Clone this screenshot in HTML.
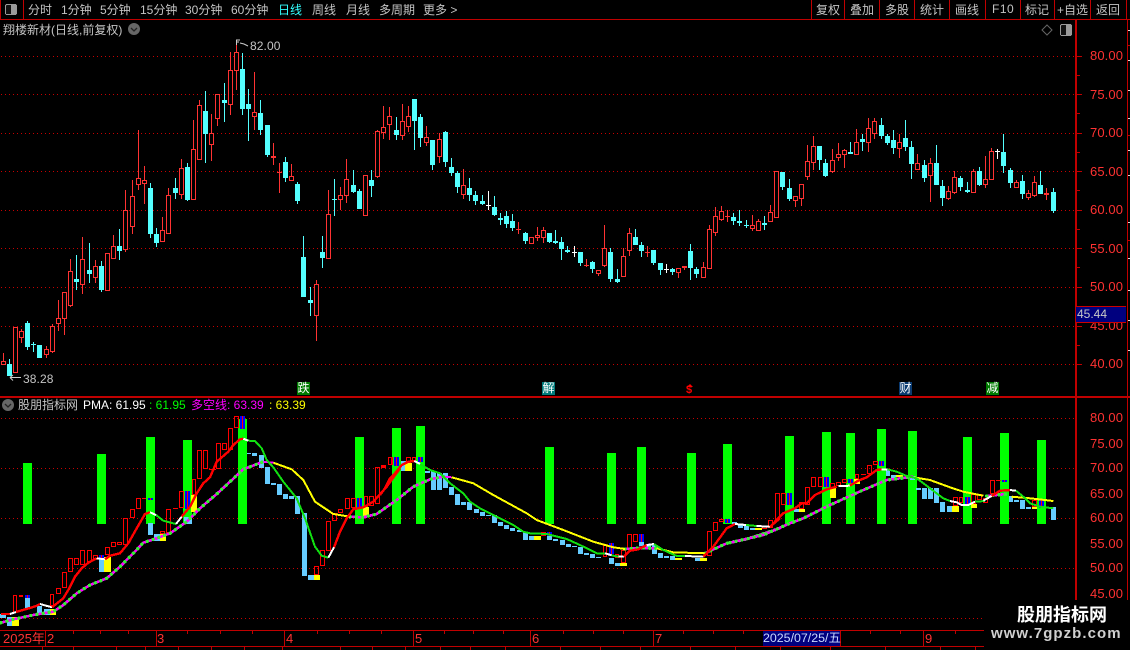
<!DOCTYPE html>
<html><head><meta charset="utf-8"><title>股朋指标网</title>
<style>
html,body{margin:0;padding:0;background:#000;}
#a{position:relative;width:1130px;height:650px;background:#000;overflow:hidden;font-family:"Liberation Sans","WenQuanYi Zen Hei","Noto Sans CJK SC",sans-serif;font-size:12px;color:#c4c4c4;}
#a span{position:absolute;white-space:nowrap;line-height:14px;}
svg{position:absolute;left:0;top:0;}
.n{color:#ff3232;font-size:13px;left:1090px;letter-spacing:.1px}
.x{color:#ff3232;font-size:13px;top:632px}
.e{width:13px;height:13px;top:382px;color:#fff;font-size:12px;text-align:center;line-height:13px!important}
</style></head><body><div id="a">
<svg id="s" width="1130" height="650" shape-rendering="crispEdges"></svg>
<svg id="l" width="1130" height="650"></svg>

<span style="left:28px;top:3px">分时</span>
<span style="left:61px;top:3px">1分钟</span>
<span style="left:100px;top:3px">5分钟</span>
<span style="left:140px;top:3px">15分钟</span>
<span style="left:185px;top:3px">30分钟</span>
<span style="left:231px;top:3px">60分钟</span>
<span style="left:278px;top:3px;color:#3ff">日线</span>
<span style="left:312px;top:3px">周线</span>
<span style="left:346px;top:3px">月线</span>
<span style="left:379px;top:3px">多周期</span>
<span style="left:423px;top:3px">更多 &gt;</span>

<span style="left:816px;top:3px">复权</span>
<span style="left:850px;top:3px">叠加</span>
<span style="left:885px;top:3px">多股</span>
<span style="left:920px;top:3px">统计</span>
<span style="left:955px;top:3px">画线</span>
<span style="left:992px;top:2px;letter-spacing:.5px">F10</span>
<span style="left:1025px;top:3px">标记</span>
<span style="left:1057px;top:3px">+自选</span>
<span style="left:1096px;top:3px">返回</span>

<span style="left:3px;top:23px">翔楼新材(日线,前复权)</span>
<span style="left:250px;top:39px;letter-spacing:.1px">82.00</span>
<span style="left:23px;top:372px;letter-spacing:.1px">38.28</span>

<span class="n" style="top:49px">80.00</span>
<span class="n" style="top:88px">75.00</span>
<span class="n" style="top:126px">70.00</span>
<span class="n" style="top:165px">65.00</span>
<span class="n" style="top:203px">60.00</span>
<span class="n" style="top:242px">55.00</span>
<span class="n" style="top:280px">50.00</span>
<span class="n" style="top:319px">45.00</span>
<span class="n" style="top:357px">40.00</span>

<span style="left:1076px;top:306px;width:50px;height:15px;background:#00007f;border-top:1px solid #c00;border-bottom:1px solid #c00;line-height:15px;color:#c8c8c8;text-indent:1px">45.44</span>

<span class="e" style="left:297px;background:#007a00">跌</span>
<span class="e" style="left:542px;background:#007a7a">解</span>
<span style="left:686px;top:383px;color:#f00;font-size:11px;font-weight:bold;line-height:14px">$</span>
<span class="e" style="left:899px;background:#0a3a70">财</span>
<span class="e" style="left:986px;background:#007a00">减</span>

<span style="left:18px;top:398px">股朋指标网</span>
<span style="left:83px;top:398px;color:#fff">PMA: 61.95</span>
<span style="left:149px;top:398px;color:#0f0">: 61.95</span>
<span style="left:191px;top:398px;color:#f0f">多空线: 63.39</span>
<span style="left:269px;top:398px;color:#ff0">: 63.39</span>

<span class="n" style="top:411px">80.00</span>
<span class="n" style="top:437px">75.00</span>
<span class="n" style="top:461px">70.00</span>
<span class="n" style="top:487px">65.00</span>
<span class="n" style="top:511px">60.00</span>
<span class="n" style="top:537px">55.00</span>
<span class="n" style="top:561px">50.00</span>
<span class="n" style="top:587px">45.00</span>

<span class="x" style="left:3px">2025年</span>
<span class="x" style="left:47px">2</span>
<span class="x" style="left:157px">3</span>
<span class="x" style="left:286px">4</span>
<span class="x" style="left:415px">5</span>
<span class="x" style="left:532px">6</span>
<span class="x" style="left:655px">7</span>
<span class="x" style="left:925px">9</span>
<span style="left:763px;top:631px;width:77px;height:15px;background:#00007f;line-height:15px;color:#c8d8ff;font-size:12.4px">2025/07/25/五</span>

<div style="position:absolute;left:984px;top:600px;width:146px;height:50px;background:#000"></div>
<span style="left:1017px;top:605px;color:#fff;font-size:18px;font-weight:bold;line-height:20px">股朋指标网</span>
<span style="left:991px;top:625px;color:#d0d0d0;font-size:15px;font-weight:bold;letter-spacing:1.05px;line-height:17px">www.7gpzb.com</span>
</div>
<script>
var s='',l='',R='#ff3232',C='#54ffff',LN='#c00000';
function rc(x,y,w,h,f){s+='<rect x="'+x+'" y="'+y+'" width="'+w+'" height="'+h+'" fill="'+f+'"/>';}
/* grid */
[56,94,133,171,210,248,287,326,364,418,468,518,568,618].forEach(function(y){
 for(var x=1;x<1075;x+=4)rc(x,y,1,1,'#c80000');
});
/* frame */
rc(0,19,1130,1,LN);rc(23,0,1,19,LN);rc(0,0,1,19,LN);
[811,844,879,914,949,985,1020,1054,1090,1126].forEach(function(x){rc(x,0,1,19,LN)});
rc(1075,20,2,580,LN);rc(1127,20,1,610,LN);
rc(0,396,1130,2,LN);rc(0,630,984,1,LN);rc(0,646,984,1,LN);
rc(1127,45,3,1,LN);rc(1127,135,3,1,LN);rc(1127,240,3,1,LN);rc(1127,397,3,1,LN);
[30,60,90,118,150,175,222,258,290,320,350].forEach(function(y){rc(1128,y,2,1,'#ddd')});
[56,94,133,171,210,248,287,326,364].forEach(function(y,i){rc(1077,y,5,1,LN);if(i<8)rc(1077,y+19,3,1,LN)});
[45,156,284,413,530,653,763,840,923].forEach(function(x){rc(x,631,1,15,LN)});
[73,100,128,187,220,252,317,349,381,444,473,503,563,593,623,683,713,743,800,870,900,955,1015,1045,1075].forEach(function(x){rc(x,631,1,3,LN)});
[42,73,116,145,178,211,244,282,340,372,405,440,470,505,560,600,640,690,735,780,830,885,940,975].forEach(function(x){rc(x,647,1,3,LN)});
/* main candles */
var D="r353,361,365,365 c359,364,376,376 r327,327,373,373 r329,331,338,343 c321,323,347,350 c342,344,345,352 c345,345,358,358 r346,349,355,358 r324,326,352,353 r300,318,324,331 r292,292,319,335 r259,271,306,307 c255,279,282,290 r237,259,285,294 c243,270,274,283 r260,266,278,283 c261,266,290,292 r253,253,291,291 r235,246,259,259 c229,246,251,260 r190,210,250,252 r180,196,227,234 r130,178,185,190 r166,180,184,204 c183,188,234,238 c228,234,243,247 r217,230,242,242 r188,195,234,234 c178,188,193,199 r159,168,195,199 c163,167,200,201 r120,149,200,200 r100,105,160,160 c91,111,134,163 r114,133,145,161 r94,94,119,126 c83,100,103,122 r52,70,105,115 r40,52,71,90 c53,69,109,115 c89,104,109,141 r72,112,117,130 c100,113,130,135 c125,125,155,157 r143,156,158,165 r163,172,173,193 c157,162,178,182 r164,176,181,181 c182,184,201,204 c236,257,297,297 c287,300,303,316 r280,284,316,341 c236,252,258,268 r190,214,259,259 c179,199,200,216 r187,195,200,210 r159,179,196,203 c170,185,192,193 c189,191,209,209 r175,175,216,216 c170,180,186,197 r130,131,177,178 r106,127,133,139 r107,116,125,140 c117,130,135,140 r104,121,136,140 r106,116,127,132 c99,99,121,150 c114,117,138,147 r126,137,143,146 c140,140,165,170 r133,139,157,163 c131,132,162,167 c158,167,173,176 c171,173,187,193 r169,185,195,199 c178,188,195,201 c191,195,201,205 c195,201,204,205 w191,205,206,210 c196,207,215,216 c213,218,220,225 c211,216,224,228 c214,221,228,231 r222,229,230,234 c232,233,241,244 r237,237,244,244 r227,235,238,241 r227,230,238,243 c233,233,242,243 c230,241,243,244 c237,242,249,260 c246,250,252,253 w246,252,253,257 c252,252,263,266 r259,265,266,267 c261,262,269,273 r270,270,274,276 r225,248,266,267 c248,252,279,282 c269,279,282,283 r248,256,277,277 r228,233,251,256 c229,237,245,245 c242,245,251,257 r246,252,253,257 c250,250,263,265 c263,263,270,275 w264,269,270,273 c268,269,272,275 r268,268,273,278 r266,266,268,270 c244,251,268,280 c267,269,274,278 r262,267,278,278 r225,229,269,269 r207,216,233,236 r206,211,220,221 r210,216,217,222 c213,217,221,225 c210,221,223,226 c220,225,226,228 r215,225,229,231 r219,221,231,231 c216,223,225,230 r205,212,222,222 r171,171,218,218 c172,172,187,190 c179,188,199,201 r196,196,201,207 r184,184,199,206 r145,161,177,180 r136,146,163,170 c146,146,160,170 c159,163,176,177 r149,160,172,173 r143,154,158,161 r149,150,155,168 c142,152,154,154 r129,142,155,155 c134,139,142,151 r118,128,143,152 r118,121,134,139 c118,125,136,139 c134,136,143,145 c130,140,148,154 r134,142,149,158 c120,138,147,151 c141,147,164,179 r154,163,170,170 c160,165,178,182 r158,163,176,202 c145,163,185,185 c180,186,198,206 r186,191,199,200 r171,177,193,194 c176,178,187,191 c182,190,192,193 r169,171,193,193 c167,171,185,186 r156,179,185,188 r148,151,180,180 w149,151,152,159 c134,152,166,173 c168,170,183,188 r180,182,188,188 c175,181,194,199 r190,193,198,200 r176,182,196,197 c171,185,194,194 r188,193,195,200 c188,192,211,213".split(' ');
D.forEach(function(t,i){
 var k=t[0],v=t.slice(1).split(',').map(Number),cx=Math.floor(3.1+6.14*i),c=k=='r'?R:k=='c'?C:'#fff';
 rc(cx,v[0],1,v[3]-v[0],c);
 var h=v[2]-v[1];
 if(k=='w'){rc(cx-2,v[1],5,1,c);return;}
 if(k=='c'||h<3){rc(cx-2,v[1],5,Math.max(h,1),c);return;}
 rc(cx-2,v[1],1,h,c);rc(cx+2,v[1],1,h,c);rc(cx-2,v[1],5,1,c);rc(cx-2,v[2]-1,5,1,c);
 rc(cx-1,v[1]+1,3,h-2,'#000');
});
/* lower panel green bars */
[[23,463],[97,454],[146,437],[183,440],[238,419],[355,437],[392,428],[416,426],[545,447],[607,453],[637,447],[687,453],[723,444],[785,436],[822,432],[846,433],[877,429],[908,431],[963,437],[1000,433],[1037,440]].forEach(function(b){rc(b[0],b[1],9,524-b[1],'#00ff00')});
/* lower candles in zoom coords */
var G=[[0,"b0,18,672,684 b21,36,681,708 y36,57,681,708 b75,90,624,655 d75,90,615,624 b111,126,648,672 b132,150,656,675 y150,168,656,675 b297,312,505,546 d297,312,496,505 y312,333,500,546 b444,459,400,435 d444,459,325,330 b462,480,432,452 y480,498,432,452 b552,576,380,400 y573,591,316,366 d555,570,303,357 d720,735,78,117 b741,753,189,191 b756,771,189,198 b777,792,195,234 b795,810,232,282 b813,828,280,285 b831,846,282,315 b849,864,312,327 b867,882,319,327 b885,900,319,372 b906,921,369,558 b924,942,555,570 y942,960,555,570 d1071,1086,325,355 y1089,1107,351,381 d1182,1197,202,228 r40,52,615,670 r58,70,616,622 r150,163,612,648 r168,183,595,613 r186,201,547,595 r204,219,505,547 r222,237,505,527 r240,255,481,527 r261,276,481,516 r279,294,496,508 r315,330,472,496 r333,348,457,472 r351,366,457,467 r369,384,385,466 r390,405,358,385 r408,423,325,358 f426,438,325,328 r480,495,424,432 r498,513,358,430 f519,534,355,358 r537,552,304,355 r576,588,267,316 r591,606,181,268 r609,624,181,238 f627,648,236,238 r648,663,160,238 r666,681,160,181 r684,699,115,181 r702,717,78,115 r942,957,529,555 r960,975,481,529 r978,993,394,483 r996,1011,370,394 r1014,1029,358,370 r1035,1050,325,358 r1053,1068,325,355 r1092,1104,319,351 r1107,1122,319,350 r1125,1140,232,342 r1143,1158,226,233 r1164,1179,202,227"],
[1140,"r3,18,226,235 b63,78,214,243 y75,96,220,243 b135,150,243,249 b153,168,244,300 b171,186,250,300 b189,204,250,294 b207,222,291,315 b225,240,312,345 b243,258,336,345 b261,276,336,360 b282,297,357,369 b300,315,366,378 b318,333,375,377 b336,351,375,399 b354,369,396,408 b372,387,405,417 b390,405,414,423 b411,426,420,426 b429,444,426,450 b447,462,438,450 y462,483,438,450 d501,516,426,438 b501,516,438,450 b519,534,447,453 b540,555,450,465 b558,573,462,471 b576,591,468,471 b594,609,471,492 b612,627,489,495 b630,645,492,504 b648,663,501,503 d687,702,459,492 b687,702,504,522 b705,720,519,528 y720,741,519,528 d777,792,433,456 b777,792,456,468 b798,813,462,470 b816,831,465,492 b834,849,489,504 b852,867,498,504 b870,885,498,510 y885,906,504,510 b945,960,504,513 y960,981,504,513 d1035,1050,388,400 b1056,1071,397,405 b1074,1089,405,414 b1092,1107,411,420 b1110,1125,414,420 y1125,1146,414,420 r24,36,202,226 d42,57,202,228 r78,93,202,220 r96,108,202,214 d114,129,202,216 r483,498,426,438 r669,681,462,501 r705,717,492,503 r723,737,480,519 r741,756,433,480 r759,774,433,456 r981,996,424,500 r999,1014,397,424 r1017,1032,388,397 r1146,1161,408,416 r1164,1179,391,414 r1185,1200,310,391"],
[2190,"b6,21,396,405 b24,39,402,411 b42,57,408,420 b60,75,414,420 y75,96,414,420 b192,207,358,366 y207,225,358,366 d171,186,310,345 d282,297,262,291 y300,318,294,324 d354,369,268,279 y372,390,268,282 d447,462,213,228 b468,480,241,258 b483,498,255,270 y498,519,256,262 b540,555,258,270 b558,573,294,300 b576,591,294,327 b594,609,294,327 b612,627,294,339 b630,645,336,366 b651,666,348,366 y666,687,348,366 d705,720,321,342 y723,741,342,354 d816,831,270,276 b837,849,318,336 b852,867,330,336 b870,885,330,357 b888,903,351,357 y906,921,351,357 d927,942,330,354 b963,978,351,390 r114,129,391,414 r135,150,310,391 r153,168,310,345 r207,222,337,358 r225,240,292,345 r243,258,262,292 r264,279,262,292 r300,315,279,294 r318,333,277,289 r336,351,268,279 r375,387,253,268 f393,408,253,257 r411,426,226,253 r429,444,213,226 r669,684,321,348 r687,699,322,340 r723,738,312,342 r741,756,312,330 r759,774,325,340 r780,795,270,312 f798,813,270,273 r906,921,330,351"]];
var bw={b:'#66ccff',y:'#ffff00',f:'#ff0000'};
G.forEach(function(g){g[1].split(' ').forEach(function(t){
 var k=t[0],v=t.slice(1).split(',').map(Number),x=Math.round((v[0]+g[0])/3),w=Math.max(Math.round((v[1]-v[0])/3),2),y=Math.round(390+v[2]/3),h=Math.max(Math.round((v[3]-v[2])/3),1);
 if(bw[k])rc(x,y,w,h,bw[k]);
 else if(k=='d'){rc(x,y,w,h,'#0000ff');rc(x+Math.floor(w/2),y,1,h,'#ff0000');}
 else{rc(x,y,1,h,'#f00');rc(x+w-1,y,1,h,'#f00');rc(x,y,w,1,'#f00');rc(x,y+h-1,w,1,'#f00');}
});});
document.getElementById('s').innerHTML=s;
/* lines, in zoom coords */
function P(o,str){return str.split(' ').map(function(p){var q=p.split(',');return (((+q[0])+o)/3).toFixed(1)+','+(390+q[1]/3).toFixed(1)}).join(' ');}
function PL(o,str,c,w,ex){l+='<polyline points="'+P(o,str)+'" fill="none" stroke="'+c+'" stroke-width="'+w+'" shape-rendering="crispEdges" '+(ex||'')+'/>';}
var Y='#ffff00',M='#ff00ff',GN='#11e011',RD='#ff0000',W='#ffffff';
/* slow */
var up=[[0,"3,698 40,688 100,675 160,665 190,645 230,610 270,585 320,565 360,530 400,490 430,458 470,445 510,430 560,395 600,355 650,312 690,275 730,238 790,215"],
[0,"1050,380 1090,382 1130,372 1190,330 1240,290 1290,268 1330,260"],
[1140,"735,477 780,474 830,475"],[1140,"975,490 1040,460 1100,447 1200,415"],
[2190,"0,458 100,435 180,400 220,385 300,345 400,300 470,270 550,260"],[2190,"770,318 830,312"]];
up.forEach(function(u){PL(u[0],u[1],M,2.6);PL(u[0],u[1],'#33f033',3.4,'stroke-linecap="round" stroke-dasharray="0.1 6.05"');});
PL(0,"790,215 820,218",M,2);PL(1140,"190,260 215,262",M,2);
PL(0,"820,218 875,238 910,270 945,335 1000,372 1050,380",Y,2);
PL(1140,"215,262 280,280 340,315 440,370 470,390 550,420 640,455 700,472 735,477",Y,2);
PL(1140,"830,475 880,487 975,490",Y,2);
PL(2190,"550,262 600,270 660,292 700,305 760,317",Y,2);
PL(2190,"845,320 900,325 970,333",Y,2);
/* fast */
[[0,RD,"3,672 30,672"],[0,W,"30,672 48,666"],[0,RD,"48,666 90,654 108,648 120,642"],[0,W,"120,642 156,652"],[0,RD,"156,652 190,625 205,600 225,560 245,535 265,518 290,505"],[0,W,"290,505 315,508"],[0,RD,"315,508 330,497 360,490 385,460 410,415 435,372 450,367"],[0,W,"450,367 468,375"],[0,GN,"468,375 490,392 528,402"],[0,W,"528,402 545,380"],[0,RD,"545,380 570,350 590,310 610,280 630,262 650,215 685,185 700,165 720,148 730,146"],[0,W,"730,146 745,152"],[0,GN,"745,152 765,153 785,175 800,210 820,232 850,275 890,325 915,385 945,470 965,497 985,503"],[0,W,"985,503 1002,472"],[0,RD,"1002,472 1020,425 1040,385 1060,358 1090,352 1120,335 1160,290 1200,235"],
[1140,RD,"0,315 15,295 30,265 45,250 65,225 85,215 103,213"],[1140,W,"103,213 120,222"],[1140,GN,"120,222 150,240 180,250 210,280 250,310 270,335 300,355 340,375 400,405 430,425 450,430 500,432 560,447 600,465 650,490 675,490"],[1140,W,"675,490 695,496"],[1140,GN,"695,496 715,500"],[1140,W,"715,500 732,500"],[1140,RD,"732,500 750,482 775,478 800,465"],[1140,W,"800,465 822,462"],[1140,GN,"822,462 850,480 890,498 915,498"],[1140,W,"915,498 970,500"],[1140,RD,"970,500 1000,470 1040,415 1065,402"],[1140,W,"1065,402 1098,405"],[1140,GN,"1098,405 1130,408"],[1140,W,"1130,408 1170,410"],[1140,RD,"1170,410 1200,385"],
[2190,RD,"122,410 135,395 160,370 195,355 215,340 230,340 255,315 290,298 320,290"],[2190,W,"325,288 360,287"],[2190,RD,"360,287 385,272 410,262 440,240 455,238"],[2190,W,"455,238 472,238"],[2190,GN,"472,238 500,245 530,258 560,265 600,295 640,325 660,333"],[2190,W,"660,333 680,337 695,345 715,345 735,335"],[2190,GN,"735,335 765,333"],[2190,W,"760,332 785,318"],[2190,RD,"785,318 810,302 840,300"],[2190,W,"840,300 858,302"],[2190,GN,"858,302 880,320 900,340 930,350 970,355"]
].forEach(function(f){PL(f[0],f[2],f[1],f[1]==GN?2:f[1]==RD?2.4:2);});
/* icons */
l+='<g shape-rendering="crispEdges"><rect x="5.5" y="4.5" width="11" height="10" rx="1.5" fill="#111" stroke="#9a9a9a"/><rect x="11" y="5" width="5" height="9" fill="#9a9a9a"/><rect x="1060.5" y="24.5" width="11" height="11" rx="1.5" fill="#111" stroke="#9a9a9a"/><rect x="1066" y="25" width="5" height="10" fill="#9a9a9a"/></g>';
l+='<path d="M1047 25l5 5-5 5-5-5z" fill="none" stroke="#666"/>';
l+='<circle cx="134" cy="29" r="6" fill="#666"/><path d="M131 28l3 3 3-3" fill="none" stroke="#222" stroke-width="1.3"/>';
l+='<circle cx="8" cy="405" r="6" fill="#666"/><path d="M5 404l3 3 3-3" fill="none" stroke="#222" stroke-width="1.3"/>';
l+='<path d="M240 40H236.5V45M236.5 42H239M240 43l4 1 4 2" fill="none" stroke="#ccc"/>';
l+='<path d="M10 377.5H21M10 377.5l3-2.5M10 377.5l3 3" fill="none" stroke="#ccc"/>';
l+='<path d="M690 384l3 3h-6z" fill="#f00"/>';
document.getElementById('l').innerHTML=l;
</script>
</body></html>
